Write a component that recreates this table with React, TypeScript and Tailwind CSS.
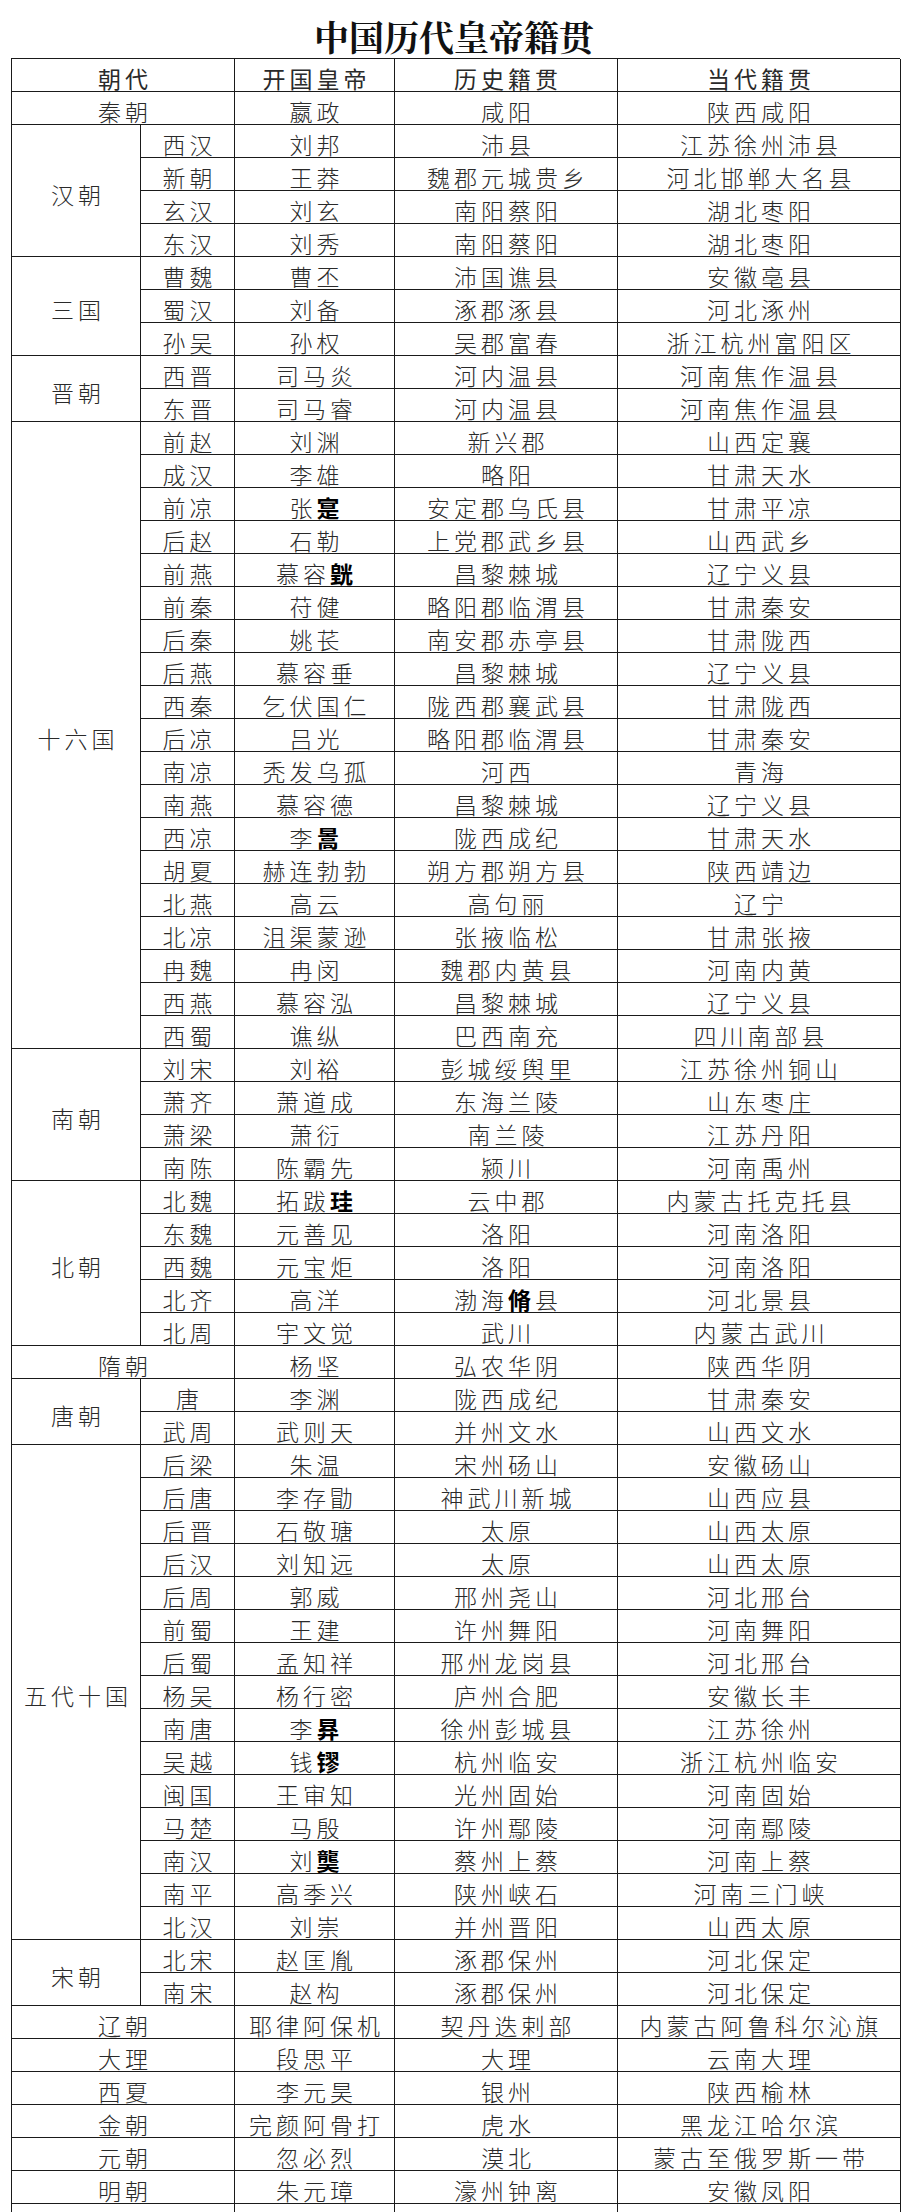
type Row = [string, string, string, string];

interface Group {
  name: string;
  rows: Row[];
}

// single-row dynasties use rows with an empty sub name
const groups: Group[] = [
  { name: '秦朝', rows: [['', '嬴政', '咸阳', '陕西咸阳']] },
  {
    name: '汉朝',
    rows: [
      ['西汉', '刘邦', '沛县', '江苏徐州沛县'],
      ['新朝', '王莽', '魏郡元城贵乡', '河北邯郸大名县'],
      ['玄汉', '刘玄', '南阳蔡阳', '湖北枣阳'],
      ['东汉', '刘秀', '南阳蔡阳', '湖北枣阳'],
    ],
  },
  {
    name: '三国',
    rows: [
      ['曹魏', '曹丕', '沛国谯县', '安徽亳县'],
      ['蜀汉', '刘备', '涿郡涿县', '河北涿州'],
      ['孙吴', '孙权', '吴郡富春', '浙江杭州富阳区'],
    ],
  },
  {
    name: '晋朝',
    rows: [
      ['西晋', '司马炎', '河内温县', '河南焦作温县'],
      ['东晋', '司马睿', '河内温县', '河南焦作温县'],
    ],
  },
  {
    name: '十六国',
    rows: [
      ['前赵', '刘渊', '新兴郡', '山西定襄'],
      ['成汉', '李雄', '略阳', '甘肃天水'],
      ['前凉', '张*寔', '安定郡乌氏县', '甘肃平凉'],
      ['后赵', '石勒', '上党郡武乡县', '山西武乡'],
      ['前燕', '慕容*皝', '昌黎棘城', '辽宁义县'],
      ['前秦', '苻健', '略阳郡临渭县', '甘肃秦安'],
      ['后秦', '姚苌', '南安郡赤亭县', '甘肃陇西'],
      ['后燕', '慕容垂', '昌黎棘城', '辽宁义县'],
      ['西秦', '乞伏国仁', '陇西郡襄武县', '甘肃陇西'],
      ['后凉', '吕光', '略阳郡临渭县', '甘肃秦安'],
      ['南凉', '秃发乌孤', '河西', '青海'],
      ['南燕', '慕容德', '昌黎棘城', '辽宁义县'],
      ['西凉', '李*暠', '陇西成纪', '甘肃天水'],
      ['胡夏', '赫连勃勃', '朔方郡朔方县', '陕西靖边'],
      ['北燕', '高云', '高句丽', '辽宁'],
      ['北凉', '沮渠蒙逊', '张掖临松', '甘肃张掖'],
      ['冉魏', '冉闵', '魏郡内黄县', '河南内黄'],
      ['西燕', '慕容泓', '昌黎棘城', '辽宁义县'],
      ['西蜀', '谯纵', '巴西南充', '四川南部县'],
    ],
  },
  {
    name: '南朝',
    rows: [
      ['刘宋', '刘裕', '彭城绥舆里', '江苏徐州铜山'],
      ['萧齐', '萧道成', '东海兰陵', '山东枣庄'],
      ['萧梁', '萧衍', '南兰陵', '江苏丹阳'],
      ['南陈', '陈霸先', '颍川', '河南禹州'],
    ],
  },
  {
    name: '北朝',
    rows: [
      ['北魏', '拓跋*珪', '云中郡', '内蒙古托克托县'],
      ['东魏', '元善见', '洛阳', '河南洛阳'],
      ['西魏', '元宝炬', '洛阳', '河南洛阳'],
      ['北齐', '高洋', '渤海*脩县', '河北景县'],
      ['北周', '宇文觉', '武川', '内蒙古武川'],
    ],
  },
  { name: '隋朝', rows: [['', '杨坚', '弘农华阴', '陕西华阴']] },
  {
    name: '唐朝',
    rows: [
      ['唐', '李渊', '陇西成纪', '甘肃秦安'],
      ['武周', '武则天', '并州文水', '山西文水'],
    ],
  },
  {
    name: '五代十国',
    rows: [
      ['后梁', '朱温', '宋州砀山', '安徽砀山'],
      ['后唐', '李存勖', '神武川新城', '山西应县'],
      ['后晋', '石敬瑭', '太原', '山西太原'],
      ['后汉', '刘知远', '太原', '山西太原'],
      ['后周', '郭威', '邢州尧山', '河北邢台'],
      ['前蜀', '王建', '许州舞阳', '河南舞阳'],
      ['后蜀', '孟知祥', '邢州龙岗县', '河北邢台'],
      ['杨吴', '杨行密', '庐州合肥', '安徽长丰'],
      ['南唐', '李*昪', '徐州彭城县', '江苏徐州'],
      ['吴越', '钱*镠', '杭州临安', '浙江杭州临安'],
      ['闽国', '王审知', '光州固始', '河南固始'],
      ['马楚', '马殷', '许州鄢陵', '河南鄢陵'],
      ['南汉', '刘*龑', '蔡州上蔡', '河南上蔡'],
      ['南平', '高季兴', '陕州峡石', '河南三门峡'],
      ['北汉', '刘崇', '并州晋阳', '山西太原'],
    ],
  },
  {
    name: '宋朝',
    rows: [
      ['北宋', '赵匡胤', '涿郡保州', '河北保定'],
      ['南宋', '赵构', '涿郡保州', '河北保定'],
    ],
  },
  { name: '辽朝', rows: [['', '耶律阿保机', '契丹迭剌部', '内蒙古阿鲁科尔沁旗']] },
  { name: '大理', rows: [['', '段思平', '大理', '云南大理']] },
  { name: '西夏', rows: [['', '李元昊', '银州', '陕西榆林']] },
  { name: '金朝', rows: [['', '完颜阿骨打', '虎水', '黑龙江哈尔滨']] },
  { name: '元朝', rows: [['', '忽必烈', '漠北', '蒙古至俄罗斯一带']] },
  { name: '明朝', rows: [['', '朱元璋', '濠州钟离', '安徽凤阳']] },
  { name: '清朝', rows: [['', '努尔哈赤', '建州', '辽宁']] },
];

const spanClass: Record<number, string> = {
  2: 'row-span-2',
  3: 'row-span-3',
  4: 'row-span-4',
  5: 'row-span-5',
  15: 'row-span-15',
  19: 'row-span-19',
};

const cell =
  'flex items-center justify-center border-r border-b border-[#1a1a1a] pt-[7px] pl-[4px] tracking-[4px] whitespace-nowrap';

// a "*" before a char marks the ones drawn in a heavier fallback glyph
function Text({ value }: { value: string }) {
  const parts: React.ReactNode[] = [];
  for (let i = 0; i < value.length; i++) {
    if (value[i] === '*' && i + 1 < value.length) {
      parts.push(
        <span key={i} className="font-bold text-black">
          {value[i + 1]}
        </span>
      );
      i++;
    } else {
      parts.push(value[i]);
    }
  }
  return <>{parts}</>;
}

export default function App() {
  return (
    <div
      className="min-h-[2212px] w-[908px] bg-white text-[#2a2a2a]"
      style={{ fontFamily: '"Noto Sans CJK SC", "Noto Sans", sans-serif' }}
    >
      <div
        className="flex h-[58px] items-end justify-center pb-[4px] text-[35px] font-bold leading-none text-[#111]"
        style={{ fontFamily: '"Noto Serif CJK SC", "Noto Sans CJK SC", serif' }}
      >
        中国历代皇帝籍贯
      </div>

      <div className="ml-[11px] grid w-[889px] grid-cols-[129px_94px_160px_223px_283px] auto-rows-[33px] border-l border-t border-[#1a1a1a] text-[23px] font-light leading-none">
        <div className={`col-span-2 font-normal ${cell}`}>朝代</div>
        <div className={`font-normal ${cell}`}>开国皇帝</div>
        <div className={`font-normal ${cell}`}>历史籍贯</div>
        <div className={`font-normal ${cell}`}>当代籍贯</div>

        {groups.map((g) =>
          g.rows.length === 1 && g.rows[0][0] === '' ? (
            [
              <div key={g.name} className={`col-span-2 ${cell}`}>
                {g.name}
              </div>,
              ...g.rows[0].slice(1).map((v, i) => (
                <div key={`${g.name}-${i}`} className={cell}>
                  <Text value={v} />
                </div>
              )),
            ]
          ) : (
            [
              <div key={g.name} className={`${spanClass[g.rows.length]} ${cell}`}>
                {g.name}
              </div>,
              ...g.rows.flatMap((r) =>
                r.map((v, i) => (
                  <div key={`${r[0]}-${i}`} className={cell}>
                    <Text value={v} />
                  </div>
                ))
              ),
            ]
          )
        )}
      </div>
    </div>
  );
}
